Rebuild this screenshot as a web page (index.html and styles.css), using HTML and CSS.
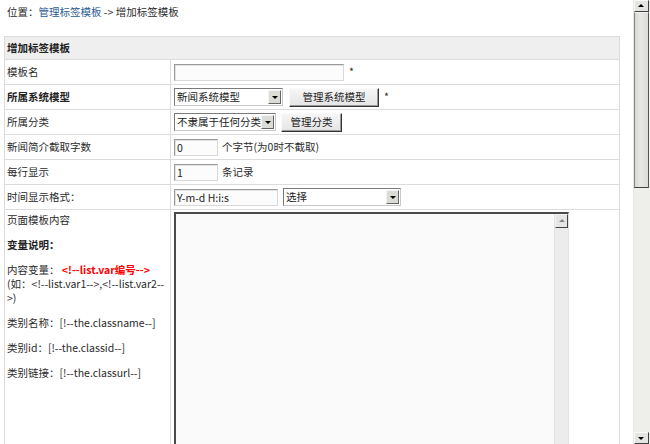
FILE: index.html
```html
<!DOCTYPE html>
<html lang="zh-CN">
<head>
<meta charset="utf-8">
<title>增加标签模板</title>
<link rel="stylesheet" href="styles.css">
</head>
<body>
<div class="viewport">
  <div class="page">
    <div class="crumb">位置：<a href="#">管理标签模板</a> -&gt; 增加标签模板</div>
    <table class="form">
      <colgroup><col class="c-lbl"><col class="c-val"></colgroup>
      <tr class="head"><td colspan="2">增加标签模板</td></tr>
      <tr>
        <td class="lbl">模板名</td>
        <td class="val"><span class="txt w-name"></span><span class="star">*</span></td>
      </tr>
      <tr>
        <td class="lbl"><b>所属系统模型</b></td>
        <td class="val"><span class="sel w-model"><span class="sel-text">新闻系统模型</span><span class="sel-btn"></span></span><span class="btn b-model">管理系统模型</span><span class="star">*</span></td>
      </tr>
      <tr>
        <td class="lbl">所属分类</td>
        <td class="val"><span class="sel w-class"><span class="sel-text">不隶属于任何分类</span><span class="sel-btn"></span></span><span class="btn b-class">管理分类</span></td>
      </tr>
      <tr>
        <td class="lbl">新闻简介截取字数</td>
        <td class="val"><span class="txt w-num">0</span><span class="note">个字节(为0时不截取)</span></td>
      </tr>
      <tr>
        <td class="lbl">每行显示</td>
        <td class="val"><span class="txt w-num">1</span><span class="note">条记录</span></td>
      </tr>
      <tr>
        <td class="lbl">时间显示格式：</td>
        <td class="val"><span class="txt w-date">Y-m-d H:i:s</span><span class="sel w-pick"><span class="sel-text">选择</span><span class="sel-btn"></span></span></td>
      </tr>
      <tr class="big">
        <td class="lbl desc">
          <p class="first">页面模板内容</p>
          <p><b>变量说明：</b></p>
          <p>内容变量： <b class="red">&lt;!--list.var编号--&gt;</b><br>(如：&lt;!--list.var1--&gt;,&lt;!--list.var2--<br>&gt;)</p>
          <p>类别名称：[!--the.classname--]</p>
          <p>类别id：[!--the.classid--]</p>
          <p>类别链接：[!--the.classurl--]</p>
        </td>
        <td class="val top">
          <div class="ta">
            <div class="ta-body"></div>
            <div class="ta-bar"><span class="ta-up"></span></div>
          </div>
        </td>
      </tr>
    </table>
  </div>
  <div class="vscroll">
    <span class="vs-up"></span>
    <span class="vs-thumb"></span>
    <span class="vs-track"></span>
    <span class="vs-down"></span>
  </div>
</div>
</body>
</html>
```
FILE: styles.css
```css
html, body {
  margin: 0;
  padding: 0;
  height: 444px;
  overflow: hidden;
  background: #fff;
}
body {
  font-family: "Noto Sans CJK SC", "Liberation Sans", sans-serif;
  font-size: 10.5px;
  color: #2a2a2a;
}
.viewport {
  display: flex;
  height: 444px;
}
.page {
  flex: 1;
  overflow: hidden;
  padding: 0 15px 0 4px;
}
.crumb {
  padding: 5px 0 0 3px;
  line-height: 14px;
  height: 14px;
  margin-bottom: 17px;
}
.crumb a {
  color: #2b5c91;
  text-decoration: none;
}
.form {
  width: 615px;
  border-collapse: collapse;
  border: 1px solid #dcdcdc;
  table-layout: fixed;
}
.c-lbl { width: 166px; }
.c-val { width: 449px; }
.form td {
  border-bottom: 1px solid #dcdcdc;
  padding: 0;
  height: 24px;
  line-height: 14px;
  vertical-align: middle;
}
.head td {
  height: 22px;
  background: #efefef;
  font-weight: bold;
  padding-left: 2px;
  color: #222;
}
.form td.lbl {
  padding-left: 2px;
  border-right: 1px solid #dcdcdc;
}
.lbl b { color: #222; }
.form td.val {
  padding-left: 3px;
  white-space: nowrap;
  font-size: 0;
}
.val > * { vertical-align: middle; }
.txt {
  display: inline-block;
  box-sizing: border-box;
  height: 17px;
  border: 1px solid #9a9a9a;
  border-right-color: #d8d8d8;
  border-bottom-color: #d8d8d8;
  box-shadow: inset 1px 1px 0 #e2e2e2;
  background: #fcfcfc;
  font-size: 10.5px;
  line-height: 15px;
  padding-left: 2px;
  color: #222;
}
.w-name { width: 170px; }
.w-num { width: 44px; }
.w-date { width: 104px; }
.star {
  font-size: 10.5px;
  margin-left: 5px;
}
.note {
  font-size: 10.5px;
  margin-left: 4px;
}
.sel {
  display: inline-flex;
  box-sizing: border-box;
  height: 18px;
  border: 1px solid #7a7a7a;
  border-right-color: #c8c8c8;
  border-bottom-color: #c8c8c8;
  background: #fff;
  align-items: center;
  font-size: 10.5px;
  color: #222;
}
.sel-text {
  flex: 1;
  padding-left: 2px;
  line-height: 16px;
  overflow: hidden;
  white-space: nowrap;
}
.sel-btn {
  flex: none;
  width: 13px;
  height: 14px;
  box-sizing: border-box;
  margin-right: 1px;
  background: #dcdcd6;
  border: 1px solid;
  border-color: #f4f4f4 #666 #666 #f4f4f4;
  position: relative;
}
.sel-btn::after {
  content: "";
  position: absolute;
  left: 3px;
  top: 5px;
  border-left: 3px solid transparent;
  border-right: 3px solid transparent;
  border-top: 3px solid #000;
}
.w-model { width: 109px; }
.w-class { width: 102px; }
.w-pick { width: 118px; margin-left: 5px; }
.btn {
  display: inline-block;
  box-sizing: border-box;
  height: 19px;
  border: 1px solid;
  border-color: #fafafa #333 #333 #fafafa;
  box-shadow: inset -1px -1px 0 #9a9a9a;
  background: linear-gradient(#f6f6f6, #e4e4e4);
  font-size: 10.5px;
  line-height: 16px;
  text-align: center;
  color: #222;
}
.b-model { width: 90px; margin-left: 6px; }
.b-class { width: 61px; margin-left: 5px; }
.form .big td { height: auto; vertical-align: top; border-bottom: none; }
.form td.desc {
  padding-top: 3px;
  white-space: nowrap;
}
.desc p {
  margin: 11px 0 0;
  line-height: 14px;
}
.desc p.first { margin-top: 0; }
.lbl b.red { color: #f00; }
.form td.top { padding-top: 2px; }
.ta {
  display: flex;
  box-sizing: border-box;
  width: 395px;
  height: 300px;
  border-top: 2px solid #4a4a4a;
  border-left: 2px solid #4a4a4a;
  border-right: 1px solid #e4e4e4;
  background: #fafafa;
}
.ta-body { flex: 1; }
.ta-bar {
  width: 13px;
  background: #ececec;
  border-left: 1px solid #e0e0e0;
  display: flex;
  flex-direction: column;
}
.ta-up {
  display: block;
  box-sizing: border-box;
  height: 14px;
  background: #e6e6e6;
  border: 1px solid;
  border-color: #f4f4f4 #444 #444 #f4f4f4;
  position: relative;
}
.ta-up::after {
  content: "";
  position: absolute;
  left: 3px;
  top: 4px;
  border-left: 3px solid transparent;
  border-right: 3px solid transparent;
  border-bottom: 3px solid #888;
}
.vscroll {
  width: 16px;
  display: flex;
  flex-direction: column;
  background: #eeeeea;
  border-left: 1px solid #e6e6e6;
}
.vs-up, .vs-down {
  display: block;
  box-sizing: border-box;
  height: 12px;
  width: 15px;
  background: #e4e4e0;
  border: 1px solid;
  border-color: #f8f8f8 #404040 #404040 #f8f8f8;
  position: relative;
}
.vs-up::after, .vs-down::after {
  content: "";
  position: absolute;
  left: 3px;
  border-left: 3px solid transparent;
  border-right: 3px solid transparent;
}
.vs-up::after { top: 3px; border-bottom: 3px solid #000; }
.vs-down::after { top: 4px; border-top: 3px solid #000; }
.vs-thumb {
  display: block;
  box-sizing: border-box;
  width: 15px;
  height: 176px;
  background: linear-gradient(90deg, #d6d6d2, #e8e8e4 40%, #dcdcd8);
  border: 1px solid;
  border-color: #f4f4f4 #555 #404040 #888;
}
.vs-track {
  flex: 1;
  background: #eeeeea;
}
```
